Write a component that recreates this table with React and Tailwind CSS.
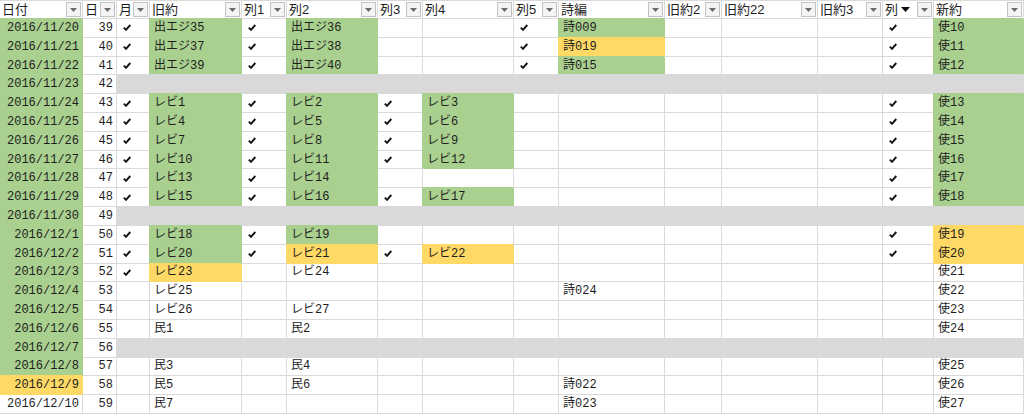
import React from "react";

const V = { check: true };
const G = (t) => ({ t, c: "g" });
const Y = (t) => ({ t, c: "y" });

const headers = ["日付", "日", "月", "旧約", "列1", "列2", "列3", "列4", "列5", "詩編", "旧約2", "旧約22", "旧約3", "列", "新約"];

const rows = [
  [G("2016/11/20"), 39, [V, G("出エジ35"), V, G("出エジ36"), "", "", V, G("詩009"), "", "", "", V, G("使10")]],
  [G("2016/11/21"), 40, [V, G("出エジ37"), V, G("出エジ38"), "", "", V, Y("詩019"), "", "", "", V, G("使11")]],
  [G("2016/11/22"), 41, [V, G("出エジ39"), V, G("出エジ40"), "", "", V, G("詩015"), "", "", "", V, G("使12")]],
  [G("2016/11/23"), 42, null],
  [G("2016/11/24"), 43, [V, G("レビ1"), V, G("レビ2"), V, G("レビ3"), "", "", "", "", "", V, G("使13")]],
  [G("2016/11/25"), 44, [V, G("レビ4"), V, G("レビ5"), V, G("レビ6"), "", "", "", "", "", V, G("使14")]],
  [G("2016/11/26"), 45, [V, G("レビ7"), V, G("レビ8"), V, G("レビ9"), "", "", "", "", "", V, G("使15")]],
  [G("2016/11/27"), 46, [V, G("レビ10"), V, G("レビ11"), V, G("レビ12"), "", "", "", "", "", V, G("使16")]],
  [G("2016/11/28"), 47, [V, G("レビ13"), V, G("レビ14"), "", "", "", "", "", "", "", V, G("使17")]],
  [G("2016/11/29"), 48, [V, G("レビ15"), V, G("レビ16"), V, G("レビ17"), "", "", "", "", "", V, G("使18")]],
  [G("2016/11/30"), 49, null],
  [G("2016/12/1"), 50, [V, G("レビ18"), V, G("レビ19"), "", "", "", "", "", "", "", V, Y("使19")]],
  [G("2016/12/2"), 51, [V, G("レビ20"), V, Y("レビ21"), V, Y("レビ22"), "", "", "", "", "", V, Y("使20")]],
  [G("2016/12/3"), 52, [V, Y("レビ23"), "", "レビ24", "", "", "", "", "", "", "", "", "使21"]],
  [G("2016/12/4"), 53, ["", "レビ25", "", "", "", "", "", "詩024", "", "", "", "", "使22"]],
  [G("2016/12/5"), 54, ["", "レビ26", "", "レビ27", "", "", "", "", "", "", "", "", "使23"]],
  [G("2016/12/6"), 55, ["", "民1", "", "民2", "", "", "", "", "", "", "", "", "使24"]],
  [G("2016/12/7"), 56, null],
  [G("2016/12/8"), 57, ["", "民3", "", "民4", "", "", "", "", "", "", "", "", "使25"]],
  [Y("2016/12/9"), 58, ["", "民5", "", "民6", "", "", "", "詩022", "", "", "", "", "使26"]],
  ["2016/12/10", 59, ["", "民7", "", "", "", "", "", "詩023", "", "", "", "", "使27"]],
];

const fills = {
  g: "bg-[#a9d08e] border-[#a9d08e] shadow-[-1px_-1px_0_0_#a9d08e]",
  y: "bg-[#ffd966] border-[#ffd966] shadow-[-1px_-1px_0_0_#ffd966]",
};

function Check() {
  return (
    <svg width="8" height="7" viewBox="0 0 8 7" className="shrink-0">
      <path d="M0.8 3.6 L3 5.8 L7.3 1" fill="none" stroke="#111" strokeWidth="1.9" />
    </svg>
  );
}

function FilterButton() {
  return (
    <div className="w-[15px] h-[15px] mr-[1px] flex items-center justify-center border border-[#c3c3c3] bg-[#f4f4f4]">
      <svg width="7" height="4" viewBox="0 0 7 4">
        <polygon points="0,0 7,0 3.5,4" fill="#6b6b6b" />
      </svg>
    </div>
  );
}

function Cell({ value, align = "left" }) {
  const v = typeof value === "object" && value !== null ? value : { t: value };
  const fill = v.c ? fills[v.c] : "border-[#dadada]";
  const pad =
    align === "right" ? "justify-end pr-[3px]" : v.check ? "pl-[6px]" : "pl-[4px]";
  return (
    <div className={`flex items-center overflow-hidden whitespace-nowrap border-r border-b ${fill} ${pad}`}>
      {v.check ? <Check /> : v.t}
    </div>
  );
}

export default function App() {
  return (
    <div className="w-[1024px] h-[414px] bg-white overflow-hidden text-[#1e1e1e] font-['Liberation_Mono','Noto_Sans_CJK_JP',monospace] text-[12px] leading-none">
      <div className="grid h-[414px] grid-cols-[83px_34px_33px_92px_45px_91px_45px_91px_45px_106px_57px_96px_65px_51px_90px] grid-rows-[19px_repeat(21,minmax(0,1fr))]">
        {headers.map((h, i) => (
          <div
            key={h + i}
            className="flex items-center justify-between border-t border-b border-r border-[#dadada] pl-[2px] text-[13px] font-['Liberation_Sans','Noto_Sans_CJK_JP',sans-serif]"
          >
            <span className="flex items-center">
              {h}
              {i === 13 && (
                <svg width="9" height="5" viewBox="0 0 9 5" className="ml-[3px]">
                  <polygon points="0,0 9,0 4.5,5" fill="#111" />
                </svg>
              )}
            </span>
            <FilterButton />
          </div>
        ))}
        {rows.map(([date, day, cells], r) => (
          <React.Fragment key={r}>
            <Cell value={date} align="right" />
            <Cell value={day} align="right" />
            {cells ? (
              cells.map((c, j) => <Cell key={j} value={c} />)
            ) : (
              <div className="col-span-13 bg-[#d9d9d9] border-b border-[#d9d9d9] shadow-[-1px_-1px_0_0_#d9d9d9]" />
            )}
          </React.Fragment>
        ))}
      </div>
    </div>
  );
}
